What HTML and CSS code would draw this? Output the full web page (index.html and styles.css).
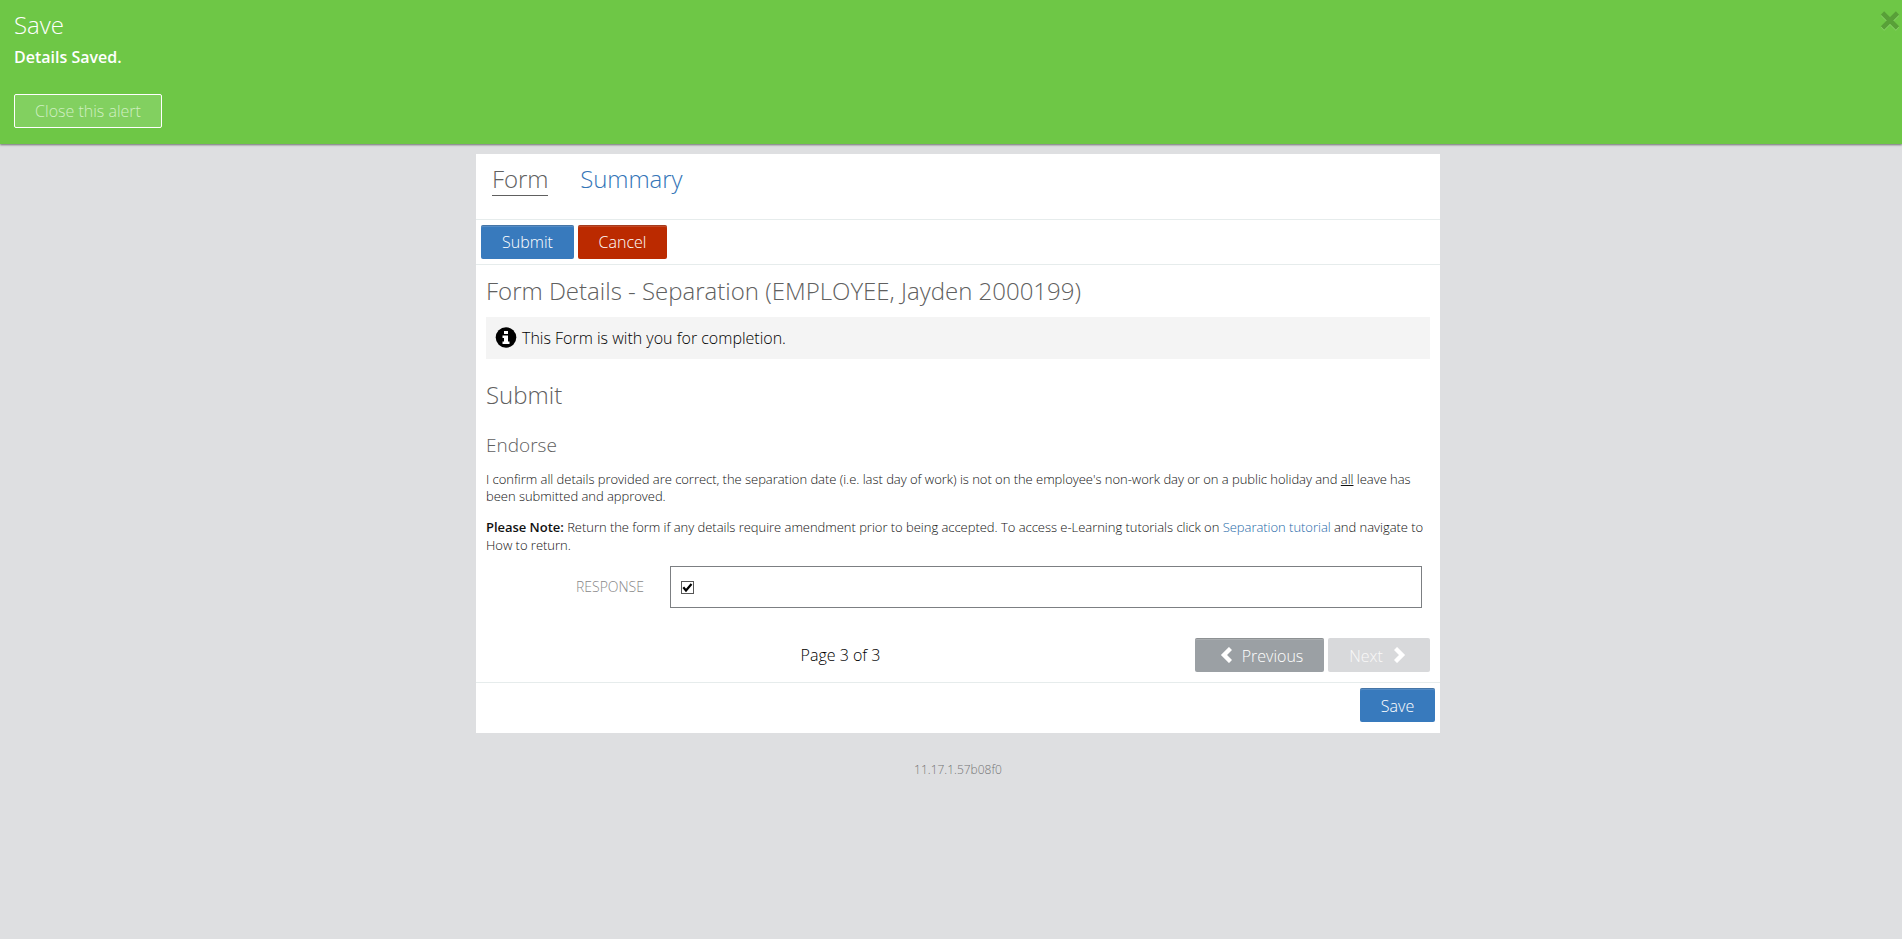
FILE: index.html
```html
<!DOCTYPE html>
<html lang="en">
<head>
<meta charset="utf-8">
<title>Separation form</title>
<link rel="stylesheet" href="styles.css">
</head>
<body>
<section class="alert">
  <div class="alert-body">
    <h2 class="alert-title">Save</h2>
    <p class="alert-text">Details Saved.</p>
    <button class="alert-button">Close this alert</button>
  </div>
  <svg class="alert-close" width="20" height="21" viewBox="0 0 20 21"><path class="close-light" d="M2.500 4l15 15M17.500 4l-15 15"/><path class="close-dark" d="M2.500 3l15 15M17.500 3l-15 15"/></svg>
</section>
<main class="panel">
  <nav class="tabs">
    <a class="tab active">Form</a>
    <a class="tab">Summary</a>
  </nav>
  <div class="toolbar">
    <button class="btn blue w-submit">Submit</button>
    <button class="btn red w-cancel">Cancel</button>
  </div>
  <div class="content">
    <h1 class="title">Form Details - Separation (EMPLOYEE, Jayden 2000199)</h1>
    <div class="info">
      <svg width="22" height="22" viewBox="0 0 22 22"><circle cx="11" cy="10.500" r="10.300"/><path fill="#fff" d="M9 4h4v3H9zM7.500 8.500H13v6h1.500V17h-7v-2.500H9V11H7.500z"/></svg>
      <span>This Form is with you for completion.</span>
    </div>
    <h2 class="section-title">Submit</h2>
    <h3 class="sub-title">Endorse</h3>
    <p class="para first">I confirm all details provided are correct, the separation date (i.e. last day of work) is not on the employee's non-work day or on a public holiday and <u>all</u> leave has<br>been submitted and approved.</p>
    <p class="para second"><b>Please Note:</b> Return the form if any details require amendment prior to being accepted. To access e-Learning tutorials click on <a class="link">Separation tutorial</a> and navigate to<br>How to return.</p>
    <div class="response">
      <label class="response-label">RESPONSE</label>
      <div class="response-box">
        <svg width="13" height="13" viewBox="0 0 13 13"><rect x=".5" y=".5" width="12" height="12" fill="#fff" stroke="#555"/><path d="M2.300 6.300L5 9.500 10.500 3" fill="none" stroke="#000" stroke-width="2.200"/></svg>
      </div>
    </div>
    <div class="pager">
      <span class="page">Page 3 of 3</span>
      <button class="btn grey w-prev"><svg width="12" height="16" viewBox="0 0 12 16"><path d="M10.500 1.500L4 8l6.500 6.500"/></svg><span>Previous</span></button>
      <button class="btn light w-next"><span>Next</span><svg width="12" height="16" viewBox="0 0 12 16"><path d="M1.500 1.500L8 8l-6.500 6.500"/></svg></button>
    </div>
  </div>
  <div class="actions"><button class="btn blue w-save">Save</button></div>
</main>
<footer class="version">11.17.1.57b08f0</footer>
</body>
</html>
```
FILE: styles.css
```css
* { box-sizing: border-box; }
body {
  margin: 0;
  min-height: 939px;
  background: #dedfe1;
  font-family: "Open Sans", sans-serif;
  font-weight: 300;
  font-size: 16px;
  color: #000;
  overflow: hidden;
}
h1, h2, h3, p { margin: 0; font-weight: 300; white-space: nowrap; }
button { font-family: inherit; font-weight: 300; font-size: 16px; padding: 0; margin: 0; }
.alert {
  height: 144px;
  display: flex;
  justify-content: space-between;
  background: #6ec746;
  color: #fff;
  box-shadow: 0 1px 2px rgba(0, 0, 0, .5);
}
.alert-body { padding: 8px 0 0 14px; }
.alert-title { font-size: 24px; line-height: 34px; }
.alert-text { font-size: 16px; font-weight: 600; line-height: 22px; margin-top: 4px; }
.alert-button {
  display: block;
  width: 148px;
  height: 34px;
  margin-top: 26px;
  border: 1px solid #fff;
  border-radius: 2px;
  background: #82d060;
  color: #d0efc2;
}
.alert-close { margin: 10px 2px 0 0; fill: none; stroke-width: 4.600; }
.close-light { stroke: #8bd46c; }
.close-dark { stroke: #58a038; }
.panel { width: 964px; margin: 10px 0 0 476px; height: 579px; background: #fff; }
.tabs { display: flex; gap: 32px; height: 66px; padding: 7px 0 0 16px; border-bottom: 1px solid #e6ecec; }
.tab { height: 35px; font-size: 24px; line-height: 36px; letter-spacing: -.1px; color: #3475b7; }
.tab.active { color: #606060; border-bottom: 1px solid #606060; }
.toolbar { height: 45px; display: flex; gap: 4px; padding: 5px; border-bottom: 1px solid #e6ecec; }
.btn {
  height: 34px;
  border: 0;
  border-radius: 2px;
  color: #fff;
  display: flex;
  align-items: center;
  justify-content: center;
  box-shadow: inset 0 1px rgba(0, 0, 0, .16), inset 0 2px rgba(255, 255, 255, .14);
}
.btn svg { fill: none; stroke: #fff; stroke-width: 4.400; }
.blue { background: #387abd; }
.red { background: #bb2a00; }
.grey { background: #9ba0a4; }
.light { background: #d8d9db; color: #f8f8f8; box-shadow: none; }
.w-submit { width: 93px; }
.w-cancel { width: 89px; }
.w-prev { width: 129px; gap: 10px; padding: 2px 0 0 4px; }
.w-prev svg, .w-next svg { margin-top: -3px; }
.w-next { width: 102px; gap: 11px; padding: 2px 3px 0 0; }
.w-save { width: 75px; padding-top: 2px; }
.content { padding: 0 10px; height: 417px; }
.title { font-size: 24px; line-height: 34px; padding-top: 9px; height: 52px; color: #606060; }
.info { height: 42px; display: flex; align-items: center; gap: 5px; padding-left: 9px; background: #f4f4f4; white-space: nowrap; }
.section-title { margin-top: 19px; font-size: 24px; line-height: 34px; color: #606060; }
.sub-title { margin-top: 19px; font-size: 19px; line-height: 28px; color: #606060; }
.para { font-size: 13px; line-height: 17px; letter-spacing: -.032px; color: #111; }
.first { margin-top: 12px; }
.second { margin-top: 13px; line-height: 18px; }
.para b { font-weight: 600; }
.link { color: #2468a8; }
.response { display: flex; margin-top: 12px; }
.response-label { width: 184px; padding-right: 26px; text-align: right; font-size: 14px; line-height: 42px; color: #888; }
.response-box { width: 752px; height: 42px; display: flex; align-items: center; padding-left: 10px; border: 1px solid #7c7f82; }
.pager { display: flex; gap: 4px; margin-top: 30px; }
.page { width: 705px; text-align: center; line-height: 34px; padding-left: 4px; }
.actions { display: flex; justify-content: flex-end; padding: 5px 5px 0 0; border-top: 1px solid #e6ecec; }
.version { margin: 27px 0 0 476px; width: 964px; text-align: center; font-size: 12px; line-height: 20px; color: #757575; }
```
